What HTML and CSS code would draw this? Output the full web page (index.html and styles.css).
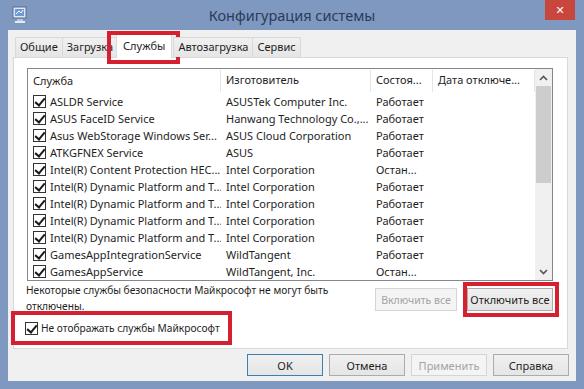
FILE: index.html
```html
<!DOCTYPE html>
<html lang="ru">
<head>
    <meta charset="UTF-8">
    <title>Конфигурация системы</title>
    <link rel="stylesheet" href="styles.css">
</head>
<body>
    <div class="window">
        <div class="title-bar">
            <div class="app-icon">
                <svg width="16" height="18" viewBox="0 0 16 18">
                    <rect x="1" y="1" width="13" height="11" fill="#dfe8f4" stroke="#5a6f92"/>
                    <rect x="3" y="3" width="9" height="7" fill="#6f9ad6"/>
                    <path d="M4 8 L7 5 L9 7 L11 4" stroke="#fff" stroke-width="1" fill="none"/>
                    <rect x="5" y="13" width="6" height="2" fill="#b9c6da"/>
                    <rect x="3" y="15" width="10" height="2" fill="#e4ebf5"/>
                </svg>
            </div>
            <div class="title-text">Конфигурация системы</div>
            <button class="close-button">&#x2715;</button>
        </div>

        <div class="client">
            <div class="tabs">
                <div class="tab">Общие</div>
                <div class="tab">Загрузка</div>
                <div class="tab tab-active">Службы<span class="mark mark-tab"></span></div>
                <div class="tab">Автозагрузка</div>
                <div class="tab">Сервис</div>
            </div>

            <div class="panel">
                <div class="list-box">
                    <div class="list-main">
                        <div class="list-header">
                            <div class="col col-name">Служба</div>
                            <div class="col col-vendor">Изготовитель</div>
                            <div class="col col-state">Состоя...</div>
                            <div class="col col-date">Дата отключе...</div>
                        </div>
                        <div class="row"><div class="col col-name"><span class="check"></span>ASLDR Service</div><div class="col col-vendor">ASUSTek Computer Inc.</div><div class="col col-state">Работает</div><div class="col col-date"></div></div>
                        <div class="row"><div class="col col-name"><span class="check"></span>ASUS FaceID Service</div><div class="col col-vendor">Hanwang Technology Co.,...</div><div class="col col-state">Работает</div><div class="col col-date"></div></div>
                        <div class="row"><div class="col col-name"><span class="check"></span>Asus WebStorage Windows Ser...</div><div class="col col-vendor">ASUS Cloud Corporation</div><div class="col col-state">Работает</div><div class="col col-date"></div></div>
                        <div class="row"><div class="col col-name"><span class="check"></span>ATKGFNEX Service</div><div class="col col-vendor">ASUS</div><div class="col col-state">Работает</div><div class="col col-date"></div></div>
                        <div class="row"><div class="col col-name"><span class="check"></span>Intel(R) Content Protection HEC...</div><div class="col col-vendor">Intel Corporation</div><div class="col col-state">Остан...</div><div class="col col-date"></div></div>
                        <div class="row"><div class="col col-name"><span class="check"></span>Intel(R) Dynamic Platform and T...</div><div class="col col-vendor">Intel Corporation</div><div class="col col-state">Работает</div><div class="col col-date"></div></div>
                        <div class="row"><div class="col col-name"><span class="check"></span>Intel(R) Dynamic Platform and T...</div><div class="col col-vendor">Intel Corporation</div><div class="col col-state">Работает</div><div class="col col-date"></div></div>
                        <div class="row"><div class="col col-name"><span class="check"></span>Intel(R) Dynamic Platform and T...</div><div class="col col-vendor">Intel Corporation</div><div class="col col-state">Работает</div><div class="col col-date"></div></div>
                        <div class="row"><div class="col col-name"><span class="check"></span>Intel(R) Dynamic Platform and T...</div><div class="col col-vendor">Intel Corporation</div><div class="col col-state">Работает</div><div class="col col-date"></div></div>
                        <div class="row"><div class="col col-name"><span class="check"></span>GamesAppIntegrationService</div><div class="col col-vendor">WildTangent</div><div class="col col-state">Работает</div><div class="col col-date"></div></div>
                        <div class="row"><div class="col col-name"><span class="check"></span>GamesAppService</div><div class="col col-vendor">WildTangent, Inc.</div><div class="col col-state">Остан...</div><div class="col col-date"></div></div>
                    </div>
                    <div class="scrollbar">
                        <div class="arrow">
                            <svg width="9" height="6" viewBox="0 0 9 6"><path d="M1 5 L4.5 1.5 L8 5" stroke="#555" stroke-width="1.6" fill="none"/></svg>
                        </div>
                        <div class="track">
                            <div class="thumb"></div>
                        </div>
                        <div class="arrow">
                            <svg width="9" height="6" viewBox="0 0 9 6"><path d="M1 1 L4.5 4.5 L8 1" stroke="#555" stroke-width="1.6" fill="none"/></svg>
                        </div>
                    </div>
                </div>

                <div class="note-row">
                    <div class="note">Некоторые службы безопасности Майкрософт не могут быть отключены.</div>
                    <div class="note-buttons">
                        <button class="win-button btn-enable" disabled>Включить все</button>
                        <button class="win-button btn-disable">Отключить все<span class="mark mark-button"></span></button>
                    </div>
                </div>

                <label class="hide-ms">
                    <span class="check"></span>Не отображать службы Майкрософт
                    <span class="mark mark-check"></span>
                </label>
            </div>

            <div class="dialog-buttons">
                <button class="win-button dlg default">OK</button>
                <button class="win-button dlg">Отмена</button>
                <button class="win-button dlg" disabled>Применить</button>
                <button class="win-button dlg">Справка</button>
            </div>
        </div>
    </div>
</body>
</html>
```

FILE: styles.css
```css
* {
    margin: 0;
    padding: 0;
    box-sizing: border-box;
}

body {
    font-family: 'Noto Sans', 'Open Sans', sans-serif;
    font-size: 11px;
    color: #1e1e1e;
    background: #7f98c0;
    width: 584px;
    height: 389px;
    overflow: hidden;
}

.window {
    display: flex;
    flex-direction: column;
    height: 389px;
}

.title-bar {
    height: 30px;
    display: flex;
    align-items: flex-start;
    position: relative;
}

.app-icon {
    width: 16px;
    margin: 6px 0 0 12px;
}

.title-text {
    flex: 1;
    text-align: center;
    font-size: 14.5px;
    color: #2b3b58;
    line-height: 30px;
    padding-left: 11px;
}

.close-button {
    width: 30px;
    height: 20px;
    margin-right: 9px;
    background: #c9463d;
    color: #fff;
    border: none;
    font-size: 11px;
    font-weight: 700;
    font-family: 'DejaVu Sans', sans-serif;
}

.client {
    flex: 1;
    margin: 0 8px 8px 8px;
    background: #f0f0f0;
    padding: 4px 8px 0 5px;
    display: flex;
    flex-direction: column;
}

.tabs {
    display: flex;
    align-items: flex-end;
    height: 23px;
    padding-left: 2px;
    position: relative;
    z-index: 1;
}

.tab {
    height: 20px;
    padding: 0 4px;
    line-height: 18px;
    background: linear-gradient(#f0f0f0, #e5e5e5);
    border: 1px solid #d9d9d9;
    border-bottom: none;
    margin-right: -1px;
    position: relative;
    white-space: nowrap;
}

.tab-active {
    height: 24px;
    line-height: 22px;
    background: #fff;
    padding: 0 6px;
    margin: 0 1px 0 -1px;
    top: 1px;
}

.panel {
    background: #fff;
    border: 1px solid #d9d9d9;
    height: 292px;
    padding: 10px 14px 0 13px;
    display: flex;
    flex-direction: column;
}

.list-box {
    display: flex;
    height: 213px;
    border: 1px solid #828790;
}

.list-main {
    flex: 1;
    display: flex;
    flex-direction: column;
}

.list-header {
    display: flex;
    height: 24px;
    align-items: center;
    margin-bottom: 1px;
}

.list-header .col {
    height: 22px;
    line-height: 20px;
    border-right: 1px solid #e5e5e5;
    padding-left: 5px;
}

.row {
    display: flex;
    height: 17px;
    line-height: 17px;
    align-items: center;
}

.col {
    white-space: nowrap;
    overflow: hidden;
}

.row .col {
    padding-left: 5px;
}

.col-name {
    width: 193px;
    display: flex;
    align-items: center;
}

.col-vendor {
    width: 150px;
}

.col-state {
    width: 62px;
}

.col-date {
    flex: 1;
}

.check {
    width: 13px;
    height: 13px;
    border: 1px solid #333;
    background: #fff;
    margin-right: 4px;
    position: relative;
    flex-shrink: 0;
}

.check::after {
    content: "";
    position: absolute;
    left: 3px;
    top: 0px;
    width: 4px;
    height: 8px;
    border: solid #1a1a1a;
    border-width: 0 2px 2px 0;
    transform: rotate(40deg);
}

.scrollbar {
    width: 17px;
    display: flex;
    flex-direction: column;
    background: #f0f0f0;
}

.arrow {
    height: 17px;
    display: flex;
    align-items: center;
    justify-content: center;
}

.track {
    flex: 1;
    padding: 0 1px;
}

.thumb {
    height: 97px;
    background: #cdcdcd;
}

.note-row {
    display: flex;
    justify-content: space-between;
    margin-top: 1px;
    height: 36px;
}

.note {
    width: 320px;
    font-size: 10.2px;
    line-height: 16px;
    margin-left: -1px;
}

.note-buttons {
    display: flex;
    gap: 10px;
    padding-top: 6px;
}

.win-button {
    font-family: inherit;
    font-size: 11px;
    color: #1e1e1e;
    height: 23px;
    padding: 0;
    white-space: nowrap;
    background: linear-gradient(#f0f0f0, #e5e5e5);
    border: 1px solid #acacac;
    position: relative;
}

.btn-enable {
    width: 82px;
    font-size: 10.5px;
}

.btn-disable {
    width: 86px;
}

.win-button:disabled {
    color: #a3a3a3;
    background: #f4f4f4;
    border-color: #d5d5d5;
}

.hide-ms {
    display: flex;
    align-items: center;
    align-self: flex-start;
    margin: 1px 0 0 -2px;
    position: relative;
    white-space: nowrap;
    height: 18px;
    font-size: 10.2px;
}

.hide-ms .check {
    margin-right: 3px;
}

.dialog-buttons {
    display: flex;
    justify-content: flex-end;
    gap: 6px;
    padding-top: 5px;
    margin-right: -1px;
}

.dlg {
    width: 76px;
    height: 22px;
}

.default {
    border-color: #3c7fb1;
}

/* red annotation frames */
.mark {
    position: absolute;
    border: 4px solid #d4202f;
    pointer-events: none;
}

.mark-tab {
    top: -4px;
    bottom: -6px;
    left: -10px;
    right: -9px;
}

.mark-button {
    top: -7px;
    bottom: -7px;
    left: -5px;
    right: -7px;
}

.mark-check {
    top: -8px;
    bottom: -8px;
    left: -14px;
    right: -12px;
}
```
